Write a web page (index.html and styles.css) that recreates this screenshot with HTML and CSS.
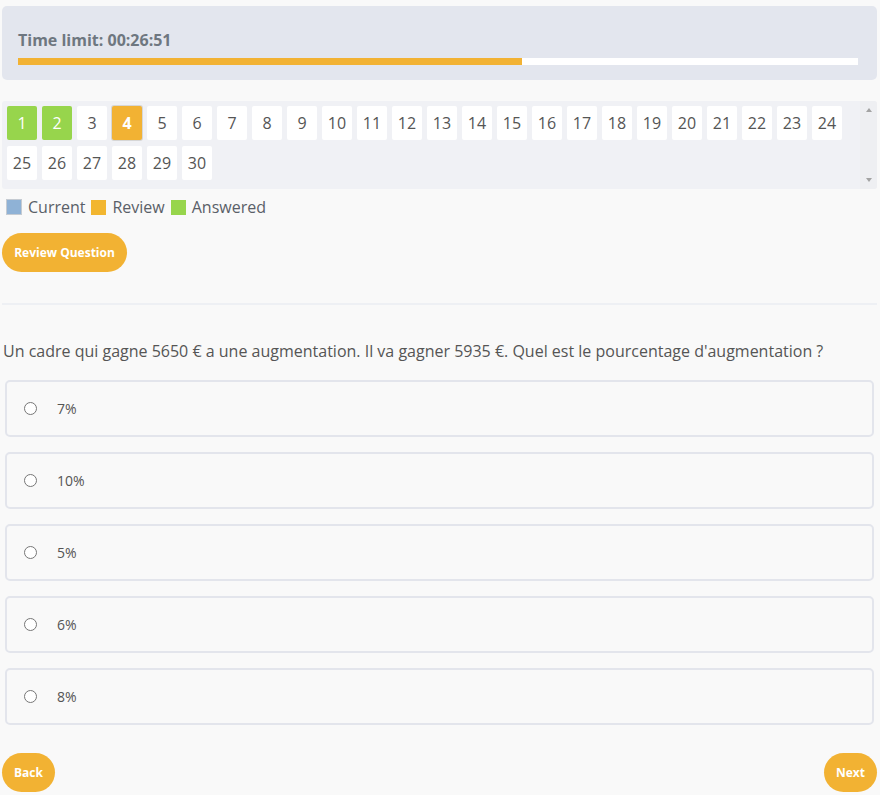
FILE: index.html
```html
<!DOCTYPE html>
<html>
<head>
<meta charset="utf-8">
<link rel="stylesheet" href="styles.css">
</head>
<body>
<div class="page">
  <div class="timer">
    <div class="timer-label">Time limit: 00:26:51</div>
    <div class="progress"><div class="progress-fill" style="width:60%"></div></div>
  </div>

  <div class="grid">
    <div class="cells">
      <span class="cell answered">1</span><span class="cell answered">2</span><span class="cell">3</span><span class="cell review current">4</span><span class="cell">5</span><span class="cell">6</span><span class="cell">7</span><span class="cell">8</span><span class="cell">9</span><span class="cell">10</span><span class="cell">11</span><span class="cell">12</span><span class="cell">13</span><span class="cell">14</span><span class="cell">15</span><span class="cell">16</span><span class="cell">17</span><span class="cell">18</span><span class="cell">19</span><span class="cell">20</span><span class="cell">21</span><span class="cell">22</span><span class="cell">23</span><span class="cell">24</span><span class="cell">25</span><span class="cell">26</span><span class="cell">27</span><span class="cell">28</span><span class="cell">29</span><span class="cell">30</span>
    </div>
    <div class="scrollbar">
      <span class="arrow arrow-up"></span>
      <span class="arrow arrow-down"></span>
    </div>
  </div>

  <div class="legend">
    <span class="sq sq-current"></span><span class="lg-text">Current</span>
    <span class="sq sq-review"></span><span class="lg-text">Review</span>
    <span class="sq sq-answered"></span><span class="lg-text">Answered</span>
  </div>

  <button class="btn btn-review">Review Question</button>

  <div class="divider"></div>

  <p class="question">Un cadre qui gagne 5650 € a une augmentation. Il va gagner 5935 €. Quel est le pourcentage d'augmentation ?</p>

  <div class="options">
    <label class="option"><input type="radio" name="q"><span>7%</span></label>
    <label class="option"><input type="radio" name="q"><span>10%</span></label>
    <label class="option"><input type="radio" name="q"><span>5%</span></label>
    <label class="option"><input type="radio" name="q"><span>6%</span></label>
    <label class="option"><input type="radio" name="q"><span>8%</span></label>
  </div>

  <div class="nav">
    <button class="btn btn-nav">Back</button>
    <button class="btn btn-nav">Next</button>
  </div>
</div>
</body>
</html>
```

FILE: styles.css
```css
html, body {
  margin: 0;
  padding: 0;
  background: #f9f9f9;
  font-family: "Open Sans", "Liberation Sans", sans-serif;
  color: #555;
}

.page {
  margin: 0 3px 0 2px;
  padding-top: 6px;
}

.timer {
  background: #e3e6ee;
  border-radius: 5px;
  padding: 23px 19px 15px 16px;
}

.timer-label {
  font-weight: 700;
  font-size: 16px;
  line-height: 22px;
  color: #6e7780;
}

.progress {
  margin-top: 7px;
  height: 7px;
  background: #ffffff;
}

.progress-fill {
  height: 100%;
  background: #f2b233;
}

.grid {
  margin-top: 21px;
  background: #f0f1f5;
  height: 88px;
  display: flex;
  border-radius: 3px;
  overflow: hidden;
}

.cells {
  flex: 1;
  padding: 5px 0 5px 5px;
  display: flex;
  flex-wrap: wrap;
  align-content: flex-start;
  column-gap: 5px;
  row-gap: 6px;
}

.scrollbar {
  width: 17px;
  background: #eeeff2;
  display: flex;
  flex-direction: column;
  justify-content: space-between;
  align-items: center;
  padding: 7px 0 7px;
}

.arrow {
  width: 0;
  height: 0;
  border-left: 3.5px solid transparent;
  border-right: 3.5px solid transparent;
}

.arrow-up {
  border-bottom: 4px solid #a3a3a3;
}

.arrow-down {
  border-top: 4px solid #a3a3a3;
}

.cell {
  width: 30px;
  height: 34px;
  background: #ffffff;
  border-radius: 2px;
  display: flex;
  align-items: center;
  justify-content: center;
  font-size: 16px;
  color: #555;
}

.cell.answered {
  background: #97d54c;
  color: #ffffff;
}

.cell.review {
  background: #f2b233;
  color: #ffffff;
}

.cell.current {
  font-weight: 700;
  box-shadow: 0 0 0 1px #d6d6d6;
}

.legend {
  display: flex;
  align-items: center;
  margin-top: 7px;
  height: 22px;
  font-size: 16px;
  padding-left: 4px;
}

.sq {
  width: 15px;
  height: 15px;
  display: inline-block;
  margin-right: 6px;
}

.sq-current {
  width: 14px;
  height: 14px;
  border: 1px solid #c5cbd2;
  background: #8fb2d6;
  margin-right: 6px;
}

.sq-review {
  background: #f2b630;
}

.sq-answered {
  background: #97d54c;
}

.lg-text {
  margin-right: 6px;
  color: #5a6068;
}

.btn {
  border: none;
  background: #f2b233;
  color: #ffffff;
  font-family: "Open Sans", "Liberation Sans", sans-serif;
  font-weight: 700;
  font-size: 12px;
  height: 39px;
  border-radius: 20px;
  padding: 0 12px;
  cursor: pointer;
}

.btn-review {
  display: block;
  margin-top: 15px;
  width: 125px;
  padding: 0;
}

.divider {
  margin-top: 31px;
  height: 2px;
  background: #eef0f4;
}

.question {
  margin: 35px 0 0 1px;
  font-size: 16px;
  line-height: 22px;
  color: #555;
}

.options {
  margin-top: 18px;
  display: flex;
  flex-direction: column;
  gap: 15px;
  padding: 0 3px 0 3px;
}

.option {
  display: flex;
  align-items: center;
  height: 53px;
  border: 2px solid #e3e5ec;
  border-radius: 5px;
  font-size: 14px;
  color: #555;
}

.option input {
  margin: 0 0 0 17px;
  width: 13px;
  height: 13px;
}

.option span {
  margin-left: 20px;
}

.nav {
  margin-top: 28px;
  display: flex;
  justify-content: space-between;
}

.btn-nav {
  width: 53px;
  padding: 0;
}
```
